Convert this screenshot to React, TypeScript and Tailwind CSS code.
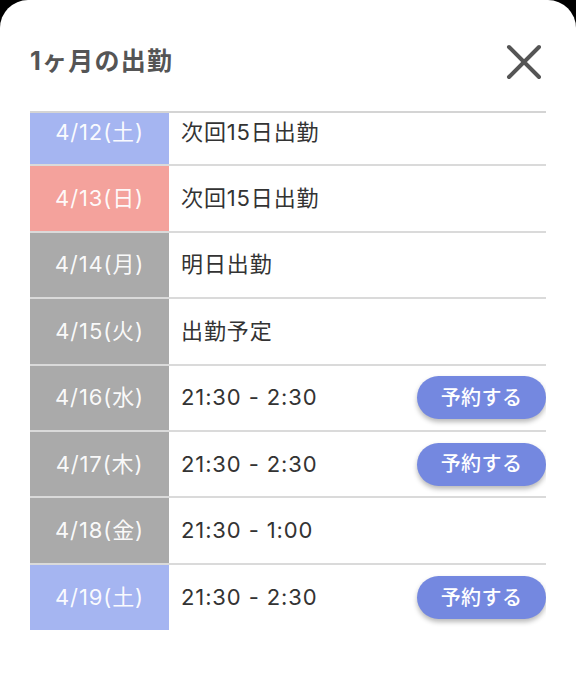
import React from 'react';

type Day = { date: string; color: 'blue' | 'red' | 'gray'; text: string; reserve?: boolean };

const days: Day[] = [
  { date: '4/12(土)', color: 'blue', text: '次回15日出勤' },
  { date: '4/13(日)', color: 'red', text: '次回15日出勤' },
  { date: '4/14(月)', color: 'gray', text: '明日出勤' },
  { date: '4/15(火)', color: 'gray', text: '出勤予定' },
  { date: '4/16(水)', color: 'gray', text: '21:30 - 2:30', reserve: true },
  { date: '4/17(木)', color: 'gray', text: '21:30 - 2:30', reserve: true },
  { date: '4/18(金)', color: 'gray', text: '21:30 - 1:00' },
  { date: '4/19(土)', color: 'blue', text: '21:30 - 2:30', reserve: true },
];

const cellColor = {
  blue: 'bg-[#a5b5f1]',
  red: 'bg-[#f4a29c]',
  gray: 'bg-[#aaaaaa]',
};

const ScheduleRow: React.FC<{ day: Day; last: boolean }> = ({ day, last }) => (
  <div className={`flex h-[66.4px] ${last ? '' : 'border-b-2 border-[#dadada]'}`}>
    <div className={`w-[139px] shrink-0 flex items-center justify-center text-[22px] tracking-[0.04em] text-white/95 ${cellColor[day.color]}`}>
      {day.date}
    </div>
    <div className="flex-1 flex items-center justify-between pl-3 text-[22px] tracking-[0.04em] text-[#333]">
      <span>{day.text}</span>
      {day.reserve && (
        <button className="w-[129px] h-[43px] rounded-full bg-[#7488e0] text-white text-[20px] font-medium tracking-[0.02em] shadow-[0_3px_5px_rgba(0,0,0,0.28)]">
          予約する
        </button>
      )}
    </div>
  </div>
);

export default function App() {
  return (
    <div className="bg-black w-[576px] h-[673px] overflow-hidden" style={{ fontFamily: 'Inter, "Noto Sans CJK JP", sans-serif' }}>
      <div className="bg-white h-full rounded-t-[28px] px-[30px]">
        <div className="flex items-center justify-between pt-[40px] h-[111px] pb-[28px]">
          <h2 className="text-[25px] font-bold tracking-[0.05em] text-[#555] leading-none">1ヶ月の出勤</h2>
          <svg width="36" height="36" viewBox="0 0 36 36" className="mr-[4px]">
            <path d="M3 3 L33 33 M33 3 L3 33" stroke="#555" strokeWidth="4" strokeLinecap="round" />
          </svg>
        </div>
        <div className="border-t-2 border-[#d4d4d4] h-[519px] overflow-hidden">
          <div className="-mt-[13px]">
            {days.map((d, i) => (
              <ScheduleRow key={d.date} day={d} last={i === days.length - 1} />
            ))}
          </div>
        </div>
      </div>
    </div>
  );
}
